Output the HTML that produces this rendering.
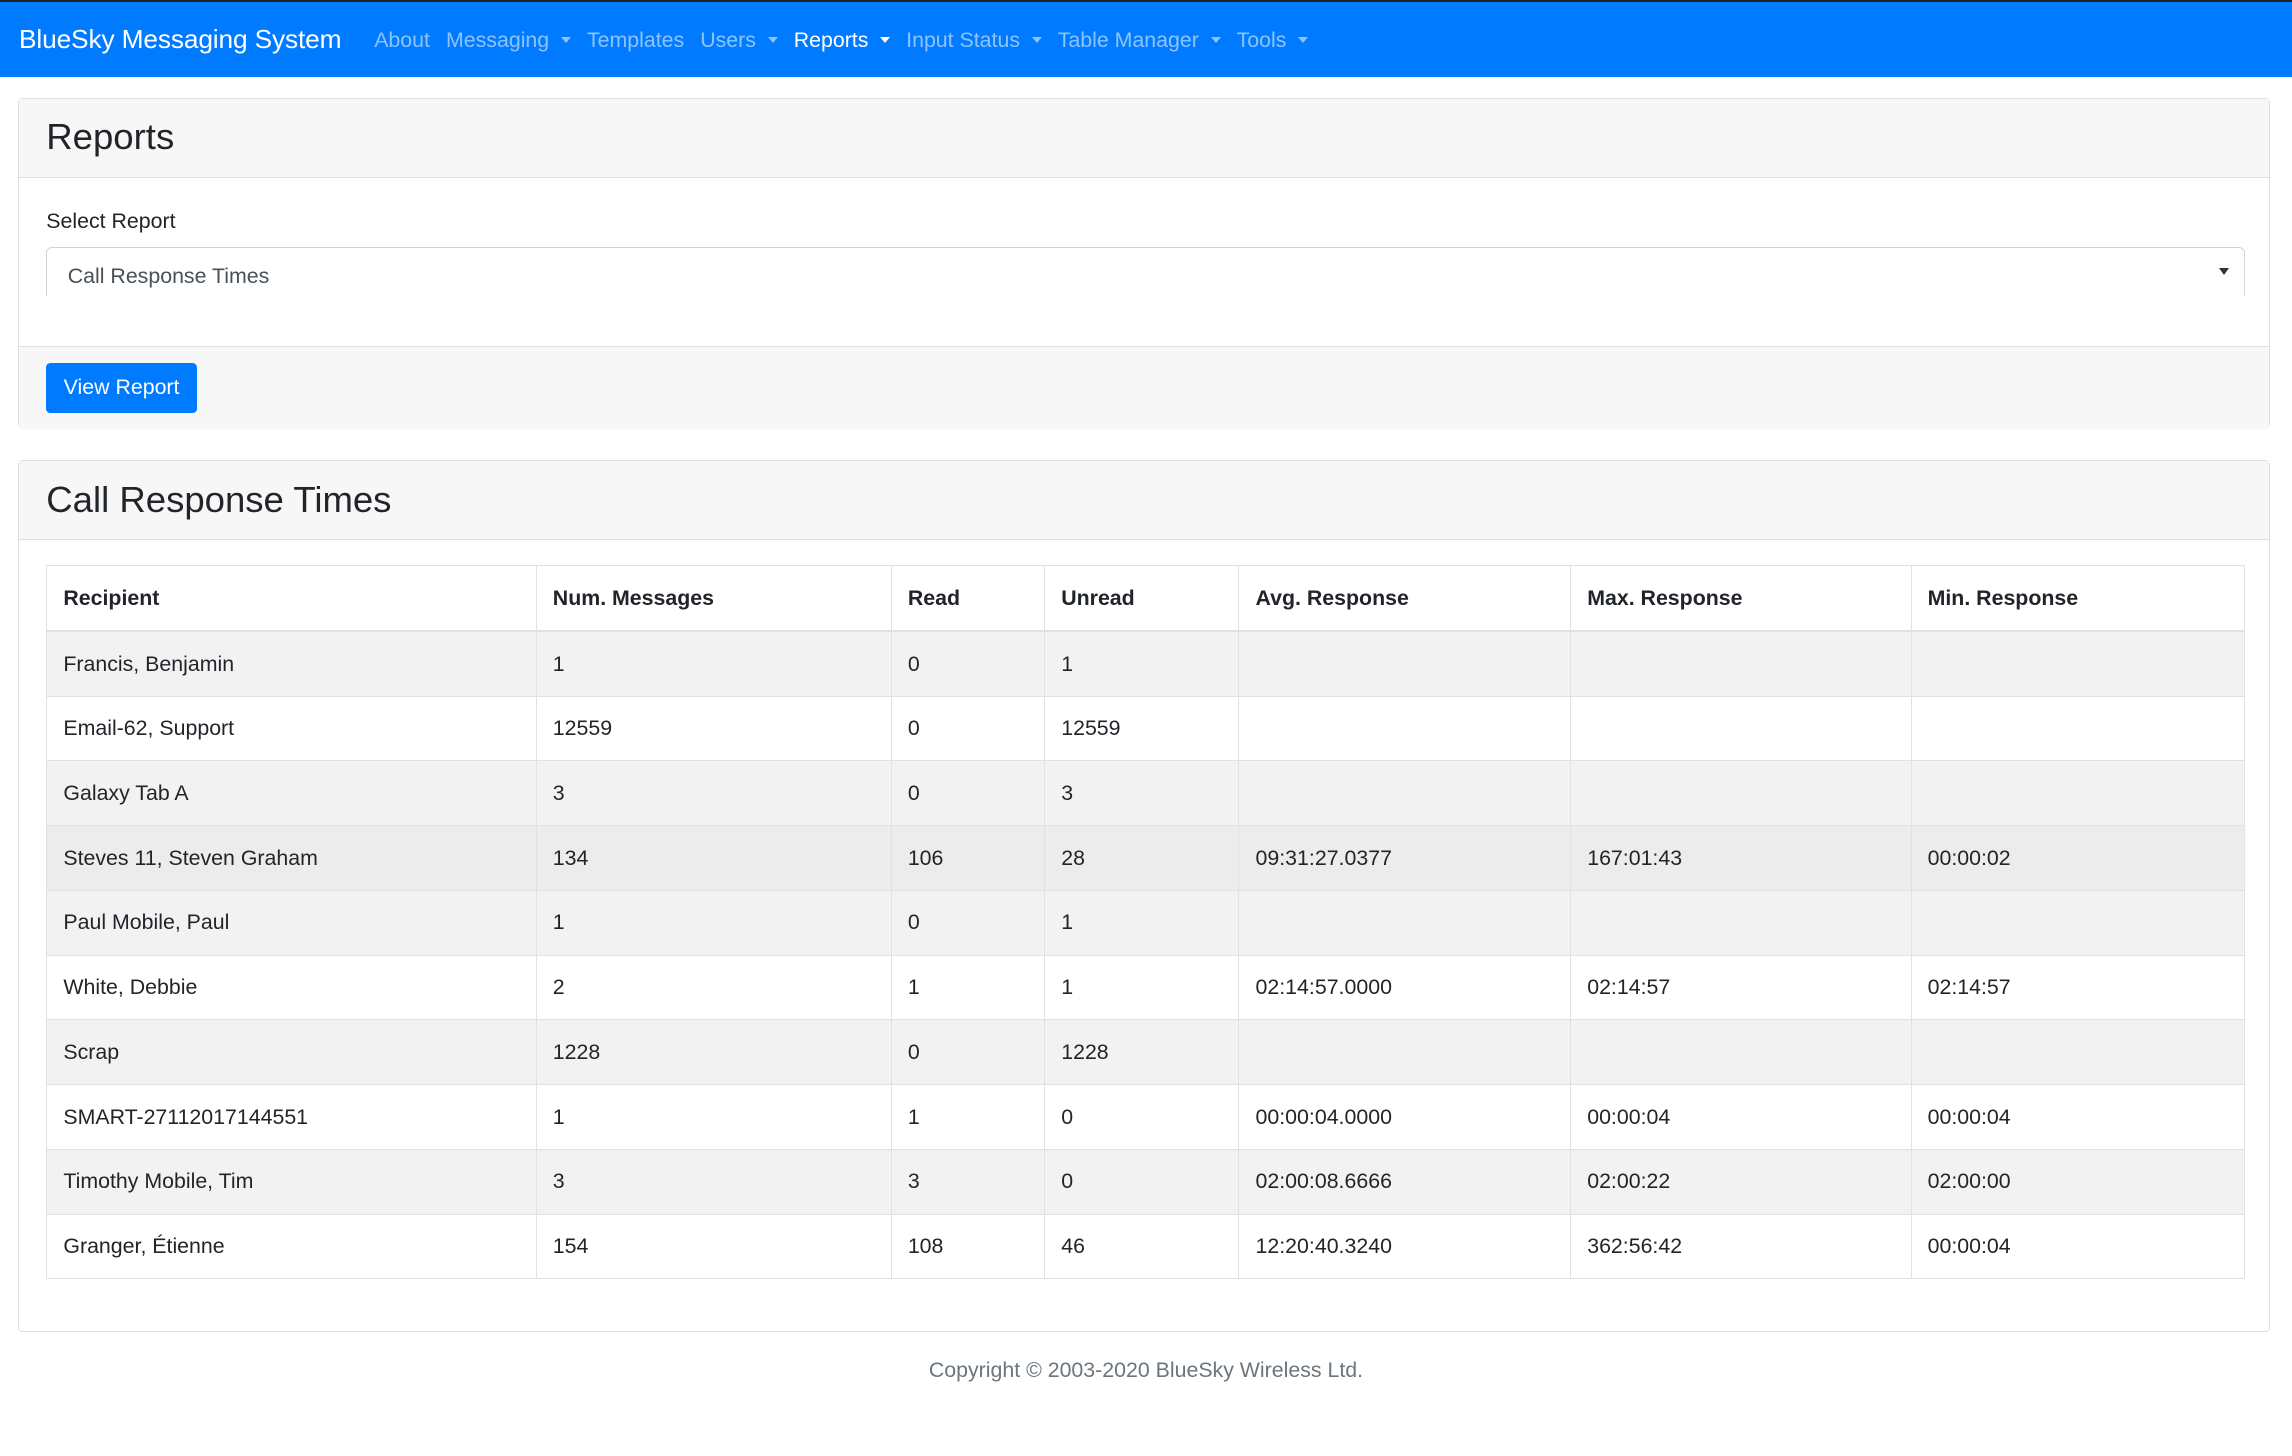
<!DOCTYPE html>
<html><head><meta charset="utf-8">
<style>
html,body{margin:0;padding:0;background:#fff}
body{zoom:1.4617;width:1568px;height:996px;overflow:hidden;font-family:"Liberation Sans",Arial,sans-serif;color:#212529;font-size:14.6px;position:relative}
.top{position:absolute;left:0;top:0;width:100%;height:1.5px;background:#222}
.nav{position:absolute;left:0;top:1.5px;width:100%;height:51px;background:#007bff}
.brand{position:absolute;left:13px;top:15px;color:#fff;font-size:18px;white-space:nowrap;letter-spacing:-0.1px}
.links{position:absolute;left:256px;top:18px;font-size:14.6px;white-space:nowrap}
.links span{color:rgba(255,255,255,.55);margin-right:11px}
.links span.a{color:#fff}
.c{display:inline-block;width:0;height:0;border-left:4px solid transparent;border-right:4px solid transparent;border-top:4.5px solid currentColor;vertical-align:3px;margin-left:8px}
.card{position:absolute;left:12px;width:1541px;border:1px solid #dfdfdf;border-radius:3px;background:#fff;box-sizing:border-box}
.hd{background:#f7f7f7;border-bottom:1px solid #dfdfdf;height:54px;box-sizing:border-box;font-size:25px;padding:12px 0 0 19px}
.lbl{position:absolute;left:19px;top:75px}
.sel{position:absolute;left:19px;top:101px;width:1504px;height:34px;border:1px solid #ced4da;border-bottom:none;border-radius:4px 4px 0 0;box-sizing:border-box;padding:11px 0 0 14px;color:#495057}
.sel i{position:absolute;right:10px;top:14px;border-left:4px solid transparent;border-right:4px solid transparent;border-top:5px solid #333}
.ft{position:absolute;left:0;top:169px;width:100%;height:56px;background:#f7f7f7;border-top:1px solid #dfdfdf}
.btn{position:absolute;left:19px;top:11px;width:103px;height:34px;background:#007bff;color:#fff;border-radius:3px;text-align:center;line-height:34px}
table{position:absolute;left:19px;top:71px;border-collapse:collapse;width:1504px}
td,th{border:1px solid #dee2e6;padding:0 11px;height:44.3px;text-align:left;box-sizing:border-box}
th{border-bottom:2px solid #dee2e6;height:45px}
tr.s td{background:#f2f2f2}
tr.h td{background:#ececec}
.copy{position:absolute;top:929px;width:100%;text-align:center;color:#6c757d}
</style></head><body>
<div class="top"></div>
<div class="nav">
<div class="brand">BlueSky Messaging System</div>
<div class="links"><span>About</span><span>Messaging<i class="c"></i></span><span>Templates</span><span>Users<i class="c"></i></span><span class="a">Reports<i class="c"></i></span><span>Input Status<i class="c"></i></span><span>Table Manager<i class="c"></i></span><span>Tools<i class="c"></i></span></div>
</div>
<div class="card" style="top:67px;height:226px">
<div class="hd">Reports</div>
<div class="lbl">Select Report</div>
<div class="sel">Call Response Times<i></i></div>
<div class="ft"><div class="btn">View Report</div></div>
</div>
<div class="card" style="top:315px;height:596px">
<div class="hd">Call Response Times</div>
<table>
<colgroup><col style="width:335px"><col style="width:243px"><col style="width:105px"><col style="width:133px"><col style="width:227px"><col style="width:233px"><col style="width:228px"></colgroup>
<tr><th>Recipient</th><th>Num. Messages</th><th>Read</th><th>Unread</th><th>Avg. Response</th><th>Max. Response</th><th>Min. Response</th></tr>
<tr class="s"><td>Francis, Benjamin</td><td>1</td><td>0</td><td>1</td><td></td><td></td><td></td></tr>
<tr><td>Email-62, Support</td><td>12559</td><td>0</td><td>12559</td><td></td><td></td><td></td></tr>
<tr class="s"><td>Galaxy Tab A</td><td>3</td><td>0</td><td>3</td><td></td><td></td><td></td></tr>
<tr class="h"><td>Steves 11, Steven Graham</td><td>134</td><td>106</td><td>28</td><td>09:31:27.0377</td><td>167:01:43</td><td>00:00:02</td></tr>
<tr class="s"><td>Paul Mobile, Paul</td><td>1</td><td>0</td><td>1</td><td></td><td></td><td></td></tr>
<tr><td>White, Debbie</td><td>2</td><td>1</td><td>1</td><td>02:14:57.0000</td><td>02:14:57</td><td>02:14:57</td></tr>
<tr class="s"><td>Scrap</td><td>1228</td><td>0</td><td>1228</td><td></td><td></td><td></td></tr>
<tr><td>SMART-27112017144551</td><td>1</td><td>1</td><td>0</td><td>00:00:04.0000</td><td>00:00:04</td><td>00:00:04</td></tr>
<tr class="s"><td>Timothy Mobile, Tim</td><td>3</td><td>3</td><td>0</td><td>02:00:08.6666</td><td>02:00:22</td><td>02:00:00</td></tr>
<tr><td>Granger, Étienne</td><td>154</td><td>108</td><td>46</td><td>12:20:40.3240</td><td>362:56:42</td><td>00:00:04</td></tr>
</table>
</div>
<div class="copy">Copyright © 2003-2020 BlueSky Wireless Ltd.</div>
</body></html>
